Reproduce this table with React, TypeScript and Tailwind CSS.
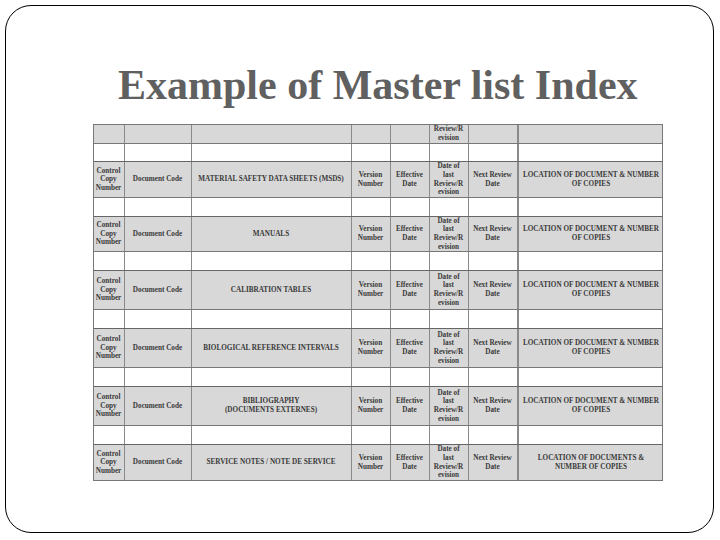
import React from "react";

const cols = "grid grid-cols-[31px_67px_160px_39px_39px_39px_50px_145px]";

type Row = { title: React.ReactNode; loc: React.ReactNode; h: number };

const rows: Row[] = [
  { title: "MATERIAL SAFETY DATA SHEETS (MSDS)", loc: <>LOCATION OF DOCUMENT &amp; NUMBER<br />OF COPIES</>, h: 36 },
  { title: "MANUALS", loc: <>LOCATION OF DOCUMENT &amp; NUMBER<br />OF COPIES</>, h: 35 },
  { title: "CALIBRATION TABLES", loc: <>LOCATION OF DOCUMENT &amp; NUMBER<br />OF COPIES</>, h: 39 },
  { title: "BIOLOGICAL REFERENCE INTERVALS", loc: <>LOCATION OF DOCUMENT &amp; NUMBER<br />OF COPIES</>, h: 39 },
  { title: <>BIBLIOGRAPHY<br />(DOCUMENTS EXTERNES)</>, loc: <>LOCATION OF DOCUMENT &amp; NUMBER<br />OF COPIES</>, h: 39 },
  { title: "SERVICE NOTES / NOTE DE SERVICE", loc: <>LOCATION OF DOCUMENTS &amp;<br />NUMBER OF COPIES</>, h: 35 },
];

const cell = "flex items-center justify-center text-center border-r border-[#8a8a8a] overflow-hidden leading-[8.6px] whitespace-nowrap";

function GrayRow({ r, last }: { r: Row; last: boolean }) {
  return (
    <div className={`${cols} bg-[#d8d8d8] ${last ? "" : "border-b border-[#777]"}`} style={{ height: r.h }}>
      <div className={cell}>Control<br />Copy<br />Number</div>
      <div className={cell}>Document Code</div>
      <div className={cell}>{r.title}</div>
      <div className={cell}>Version<br />Number</div>
      <div className={cell}>Effective<br />Date</div>
      <div className={cell}>Date of<br />last<br />Review/R<br />evision</div>
      <div className={`${cell} border-r-2 border-r-[#8a8a8a]`}>Next Review<br />Date</div>
      <div className="flex items-center justify-center text-center leading-[8.6px] whitespace-nowrap">{r.loc}</div>
    </div>
  );
}

function WhiteRow({ h }: { h: number }) {
  return (
    <div className={`${cols} bg-white border-b border-[#666]`} style={{ height: h }}>
      {[0, 1, 2, 3, 4, 5].map((i) => (
        <div key={i} className="border-r border-[#8a8a8a]" />
      ))}
      <div className="border-r-2 border-[#8a8a8a]" />
      <div />
    </div>
  );
}

export default function App() {
  return (
    <div className="w-[720px] h-[540px] bg-white p-[5px]">
      <div className="w-[709px] h-[528px] border-[1.5px] border-black rounded-[26px] flex flex-col">
        <div
          className="h-[118px] pl-[112px] pt-[58px] text-[42px] font-bold text-[#606060] leading-none whitespace-nowrap"
          style={{ fontFamily: '"Liberation Serif", serif' }}
        >
          Example of Master list Index
        </div>
        <div
          className="ml-[86.5px] w-[570px] border border-[#777] text-[7.2px] font-bold text-[#3a3a3a]"
          style={{ fontFamily: '"Liberation Serif", serif' }}
        >
          <div className={`${cols} bg-[#d8d8d8] border-b border-[#777] h-[19px]`}>
            {[0, 1, 2, 3, 4].map((i) => (
              <div key={i} className="border-r border-[#8a8a8a]" />
            ))}
            <div className="border-r border-[#8a8a8a] flex flex-col items-center justify-center text-center leading-[8.6px]">
              Review/R<br />evision
            </div>
            <div className="border-r-2 border-[#8a8a8a]" />
            <div />
          </div>
          {rows.map((r, i) => (
            <React.Fragment key={i}>
              <WhiteRow h={i === 0 ? 18 : 19} />
              <GrayRow r={r} last={i === rows.length - 1} />
            </React.Fragment>
          ))}
        </div>
      </div>
    </div>
  );
}
